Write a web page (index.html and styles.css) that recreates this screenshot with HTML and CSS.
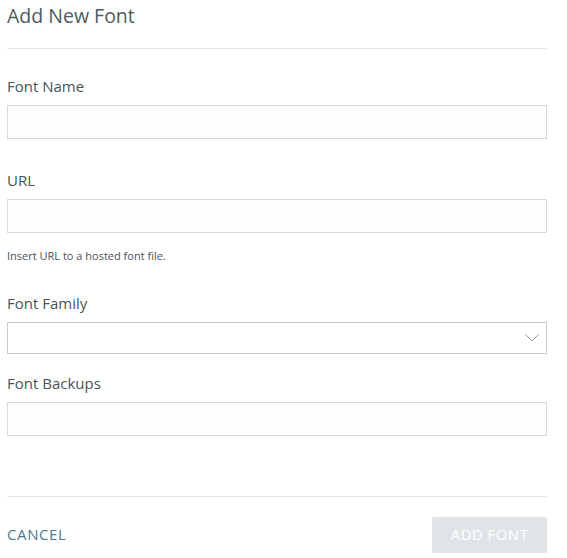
FILE: index.html
```html
<!DOCTYPE html>
<html>
<head>
<meta charset="utf-8">
<link rel="stylesheet" href="styles.css">
</head>
<body>
<div class="modal">
  <h1 class="title">Add New Font</h1>
  <hr class="divider">
  <div class="field field-name">
    <label class="label">Font Name</label>
    <div class="input"></div>
  </div>
  <div class="field field-url">
    <label class="label">URL</label>
    <div class="input"></div>
    <div class="help">Insert URL to a hosted font file.</div>
  </div>
  <div class="field field-family">
    <label class="label">Font Family</label>
    <div class="select">
      <svg class="chev" width="14" height="8" viewBox="0 0 14 8"><path d="M0.5 0.5 L7 7 L13.5 0.5" fill="none" stroke="#8a9599" stroke-width="1"/></svg>
    </div>
  </div>
  <div class="field field-backups">
    <label class="label">Font Backups</label>
    <div class="input"></div>
  </div>
  <hr class="divider bottom">
  <div class="footer">
    <span class="cancel">CANCEL</span>
    <span class="add">ADD FONT</span>
  </div>
</div>
</body>
</html>
```
FILE: styles.css
```css
html, body { margin: 0; padding: 0; background: #fff; }
body { font-family: "Open Sans", "Lato", sans-serif; }
.modal { width: 540px; padding-left: 7px; }
.title { margin: 0; padding-top: 4px; font-size: 19.5px; font-weight: 400; color: #4d5a5e; line-height: 24px; height: 24px; }
.divider { margin: 20px 0 0 0; border: 0; border-top: 1px solid #e0e6e6; height: 0; }
.label { display: block; font-size: 15px; color: #4a5357; line-height: 16px; }
.input { margin-top: 11px; height: 32px; border: 1px solid #d5dadb; background: #fcfdfd; }
.help { margin-top: 17px; font-size: 11px; color: #4a5357; line-height: 12px; }
.field-name { margin-top: 29px; }
.field-url { margin-top: 33px; }
.field-family { margin-top: 33px; }
.field-backups { margin-top: 21px; }
.select { margin-top: 11px; height: 30px; border: 1px solid #c5cccd; background: #fff; display: flex; align-items: center; justify-content: flex-end; padding-right: 7px; }
.chev { display: block; }
.divider.bottom { margin-top: 60px; }
.footer { display: flex; justify-content: space-between; align-items: center; margin-top: 20px; }
.cancel { font-size: 15px; color: #4a7c87; letter-spacing: 0.6px; line-height: 16px; margin-top: -2px; }
.add { width: 115px; height: 36px; box-sizing: border-box; padding-bottom: 3px; background: #dfe5e6; color: #fff; font-size: 15px; letter-spacing: 0.4px; display: flex; align-items: center; justify-content: center; border-radius: 2px; }
```
